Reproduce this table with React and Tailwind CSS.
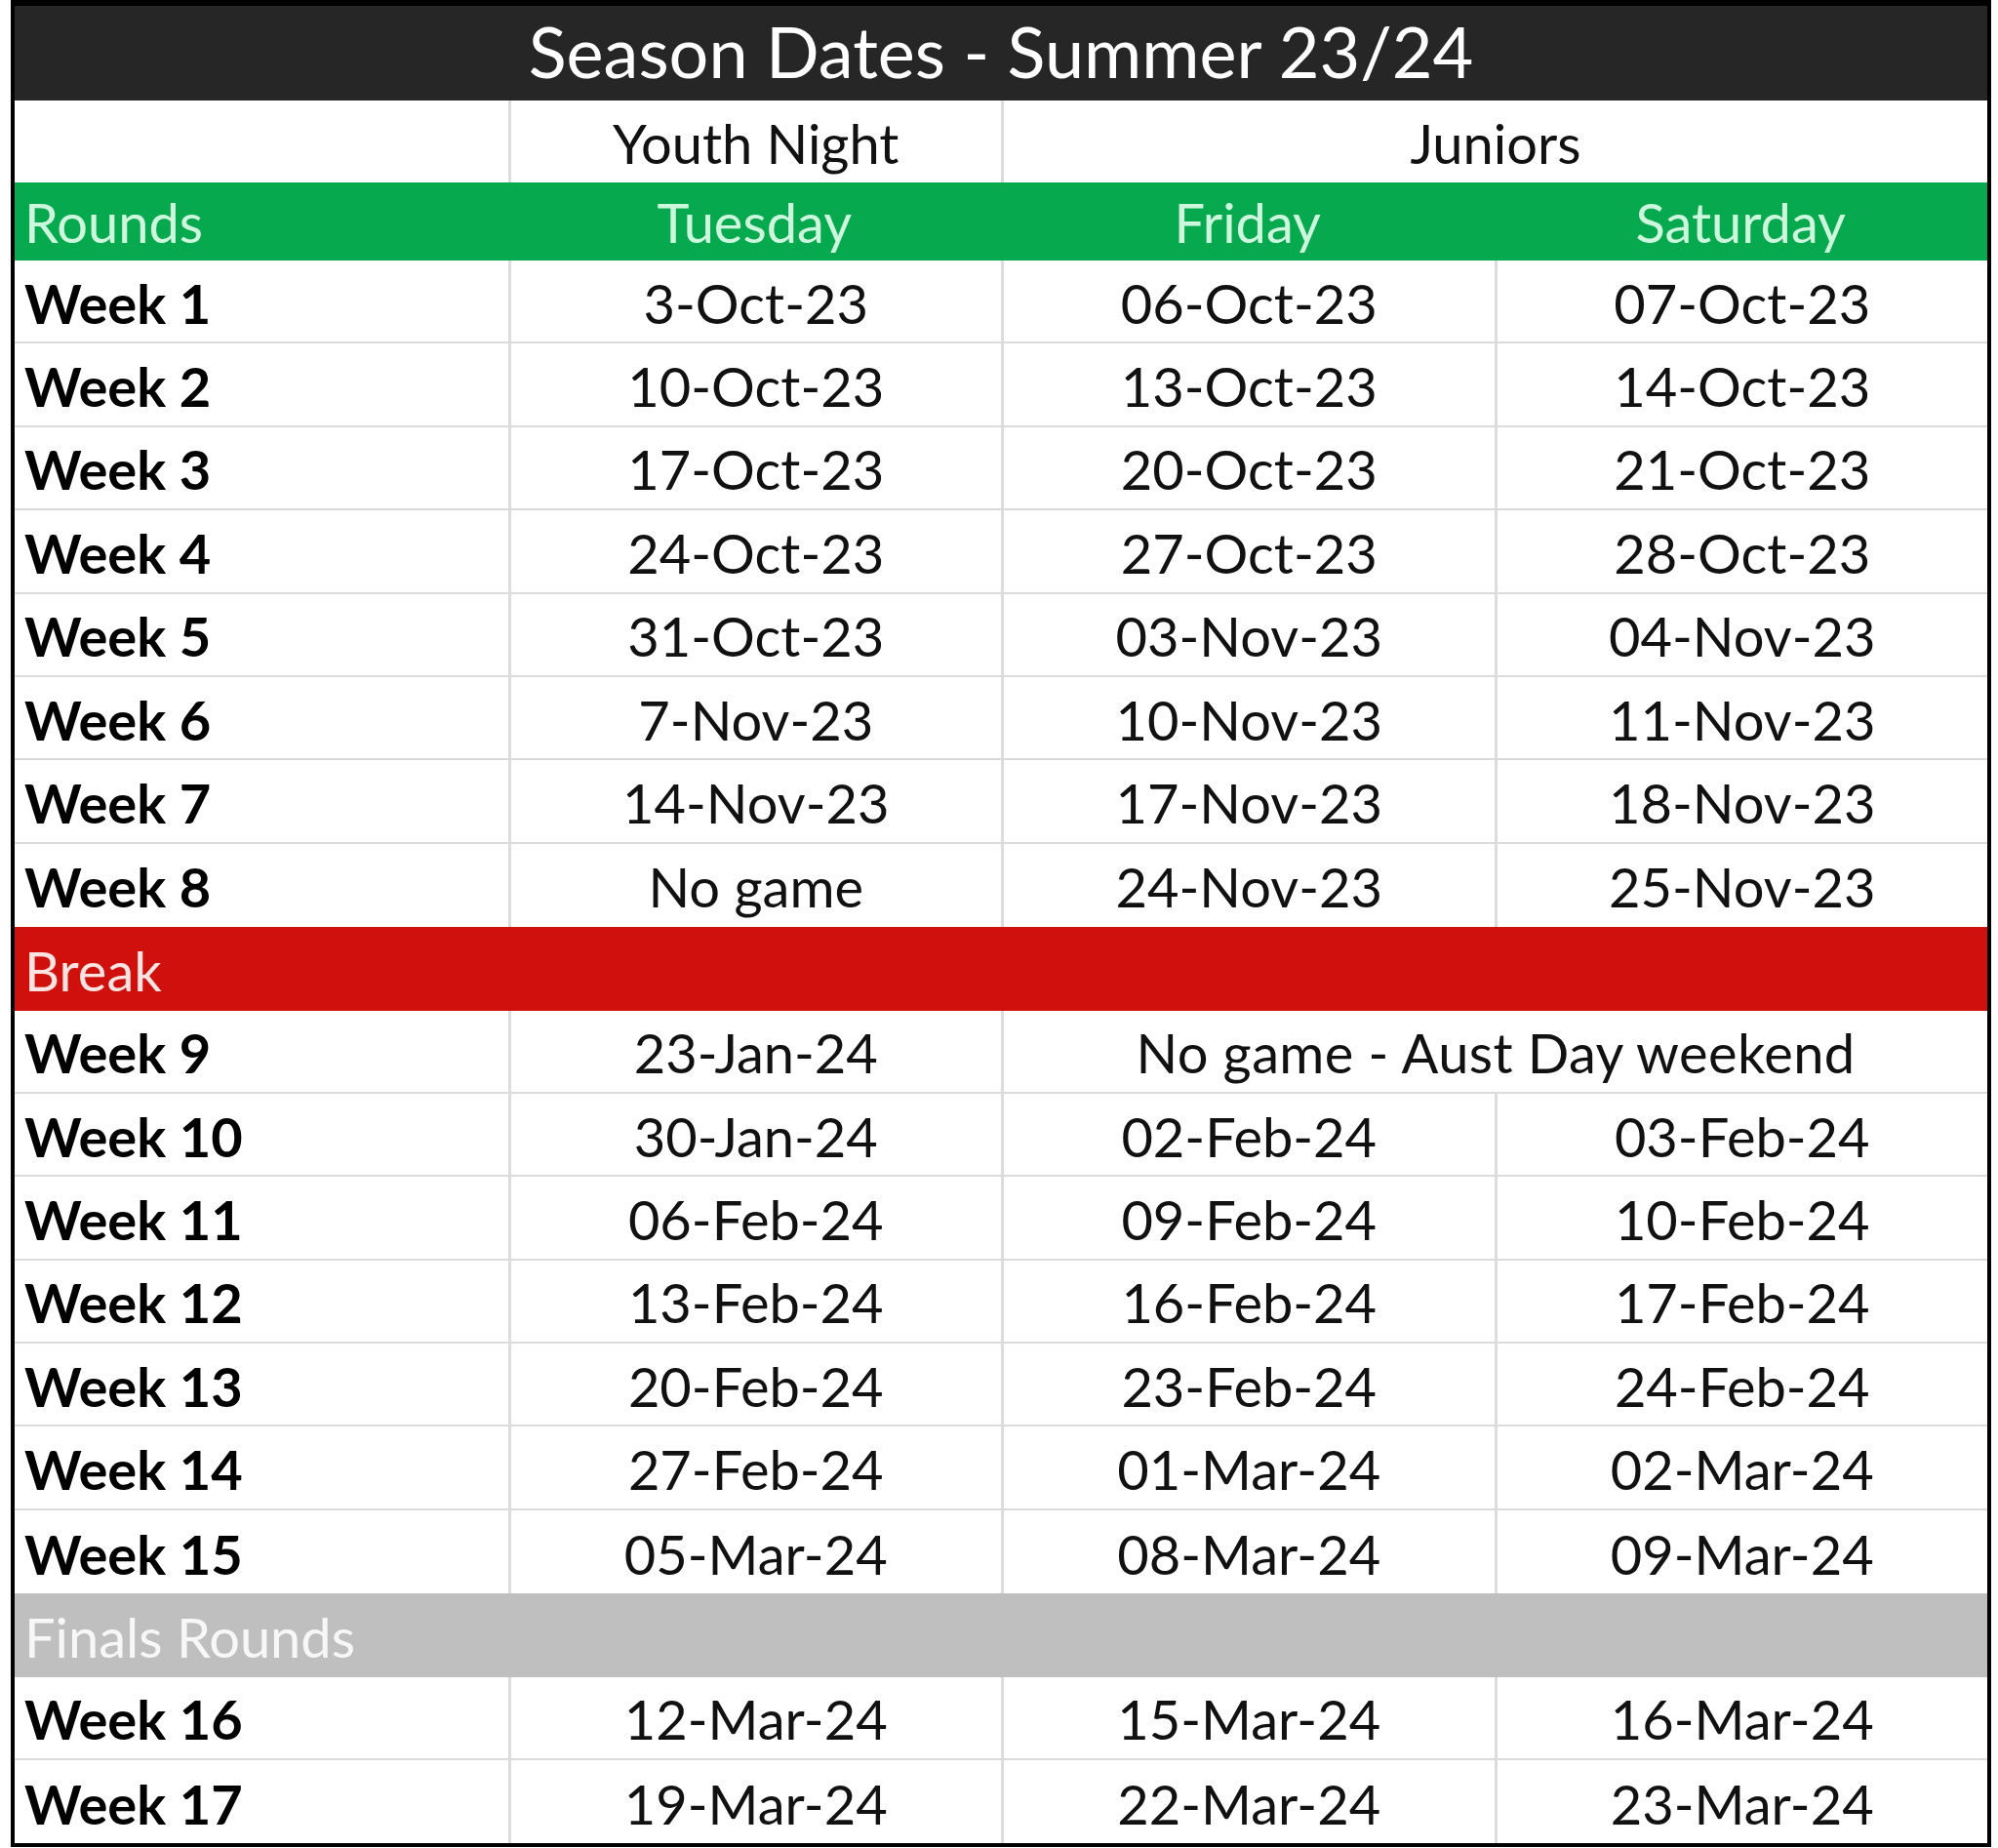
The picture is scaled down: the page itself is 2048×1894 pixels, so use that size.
import React from "react";

const weeksA = [
  ["Week 1", "3-Oct-23", "06-Oct-23", "07-Oct-23"],
  ["Week 2", "10-Oct-23", "13-Oct-23", "14-Oct-23"],
  ["Week 3", "17-Oct-23", "20-Oct-23", "21-Oct-23"],
  ["Week 4", "24-Oct-23", "27-Oct-23", "28-Oct-23"],
  ["Week 5", "31-Oct-23", "03-Nov-23", "04-Nov-23"],
  ["Week 6", "7-Nov-23", "10-Nov-23", "11-Nov-23"],
  ["Week 7", "14-Nov-23", "17-Nov-23", "18-Nov-23"],
  ["Week 8", "No game", "24-Nov-23", "25-Nov-23"],
];

const weeksB = [
  ["Week 9", "23-Jan-24", "No game - Aust Day weekend"],
  ["Week 10", "30-Jan-24", "02-Feb-24", "03-Feb-24"],
  ["Week 11", "06-Feb-24", "09-Feb-24", "10-Feb-24"],
  ["Week 12", "13-Feb-24", "16-Feb-24", "17-Feb-24"],
  ["Week 13", "20-Feb-24", "23-Feb-24", "24-Feb-24"],
  ["Week 14", "27-Feb-24", "01-Mar-24", "02-Mar-24"],
  ["Week 15", "05-Mar-24", "08-Mar-24", "09-Mar-24"],
];

const weeksC = [
  ["Week 16", "12-Mar-24", "15-Mar-24", "16-Mar-24"],
  ["Week 17", "19-Mar-24", "22-Mar-24", "23-Mar-24"],
];

function WeekRow({ row, last }) {
  const merged = row.length === 3;
  return (
    <div
      className={
        "grid grid-cols-4 h-[85.4px] " +
        (last ? "" : "border-b-2 border-[#dadada]")
      }
    >
      <div className="flex items-center pl-[10px] pt-[4px] font-bold text-black">
        {row[0]}
      </div>
      <div className="flex items-center justify-center pt-[4px] border-l-[3px] border-[#dcdcdc] text-[#111]">
        {row[1]}
      </div>
      {merged ? (
        <div className="col-span-2 flex items-center justify-center pt-[4px] border-l-[3px] border-[#dcdcdc] text-[#111] tracking-[0.4px]">
          {row[2]}
        </div>
      ) : (
        <>
          <div className="flex items-center justify-center pt-[4px] border-l-[3px] border-[#dcdcdc] text-[#111]">
            {row[2]}
          </div>
          <div className="flex items-center justify-center pt-[4px] border-l-[3px] border-[#dcdcdc] text-[#111]">
            {row[3]}
          </div>
        </>
      )}
    </div>
  );
}

export default function App() {
  return (
    <div className="w-[2048px] h-[1894px] bg-white">
      <div
        className="ml-[11px] w-[2030px] border-x-4 border-b-4 border-t-[6px] border-black text-[56px] leading-none"
        style={{ fontFamily: "Lato, 'Open Sans', sans-serif" }}
      >
        <div className="h-[97px] bg-[#262626] flex items-center justify-center text-white text-[72px] pb-[6px]">
          Season Dates - Summer 23/24
        </div>
        <div className="grid grid-cols-4 h-[84px] bg-white text-[#111]">
          <div></div>
          <div className="flex items-center justify-center pt-[4px] border-l-[3px] border-[#dcdcdc]">
            Youth Night
          </div>
          <div className="col-span-2 flex items-center justify-center pt-[4px] border-l-[3px] border-[#dcdcdc]">
            Juniors
          </div>
        </div>
        <div className="grid grid-cols-4 h-[80px] bg-[#07a94f] text-[#cdf7dc]">
          <div className="flex items-center pl-[10px] pt-[2px]">Rounds</div>
          <div className="flex items-center justify-center pt-[2px]">Tuesday</div>
          <div className="flex items-center justify-center pt-[2px]">Friday</div>
          <div className="flex items-center justify-center pt-[2px]">Saturday</div>
        </div>
        {weeksA.map((r, i) => (
          <WeekRow key={r[0]} row={r} last={i === weeksA.length - 1} />
        ))}
        <div className="h-[85.4px] bg-[#d0100d] flex items-center pl-[10px] pt-[4px] text-[#ffe3e0]">
          Break
        </div>
        {weeksB.map((r, i) => (
          <WeekRow key={r[0]} row={r} last={i === weeksB.length - 1} />
        ))}
        <div className="h-[85.4px] bg-[#bfbfbf] flex items-center pl-[10px] pt-[4px] text-[#f7f7f7]">
          Finals Rounds
        </div>
        {weeksC.map((r, i) => (
          <WeekRow key={r[0]} row={r} last={i === weeksC.length - 1} />
        ))}
      </div>
    </div>
  );
}
